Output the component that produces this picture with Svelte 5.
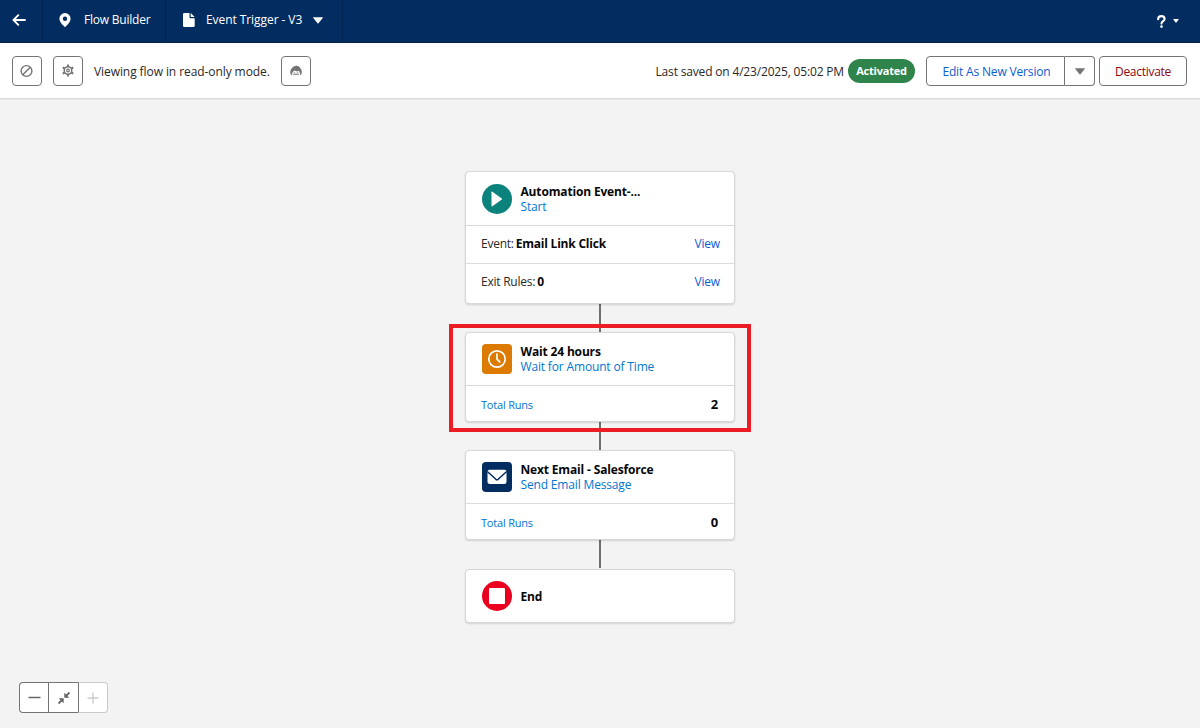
<script lang="ts">
  interface FlowRow {
    label: string;
    value: string;
    action?: string;
  }

  interface FlowNode {
    id: string;
    icon: string;
    title: string;
    type?: string;
    rows?: FlowRow[];
    runs?: number;
    highlighted?: boolean;
  }

  const nodes: FlowNode[] = [
    {
      id: 'start',
      icon: 'play',
      title: 'Automation Event-...',
      type: 'Start',
      rows: [
        { label: 'Event:', value: 'Email Link Click', action: 'View' },
        { label: 'Exit Rules:', value: '0', action: 'View' }
      ]
    },
    { id: 'wait', icon: 'clock', title: 'Wait 24 hours', type: 'Wait for Amount of Time', runs: 2, highlighted: true },
    { id: 'email', icon: 'envelope', title: 'Next Email - Salesforce', type: 'Send Email Message', runs: 0 },
    { id: 'end', icon: 'stop', title: 'End' }
  ];
</script>

<div class="builder">
  <header class="nav">
    <button class="nav-back" aria-label="Back">
      <svg width="14" height="12" viewBox="0 0 14 12"><path d="M13 6H2M6.3 1.2 1.5 6l4.8 4.8" fill="none" stroke="#fff" stroke-width="1.9" stroke-linecap="round" stroke-linejoin="round" /></svg>
    </button>
    <div class="nav-app">
      <svg width="12" height="14" viewBox="0 0 12 14"><path fill="#fff" fill-rule="evenodd" d="M6 0a5.6 5.6 0 0 0-5.6 5.6C.4 9.300 4 12.300 5.500 13.700q.5.400 1 0C8 12.300 11.600 9.300 11.600 5.600A5.600 5.600 0 0 0 6 0Zm0 3.500a2.200 2.200 0 1 1 0 4.400 2.200 2.200 0 0 1 0-4.400Z" /></svg>
      <span>Flow Builder</span>
    </div>
    <div class="nav-flow">
      <svg width="12" height="14" viewBox="0 0 12 14"><path fill="#fff" d="M1.300 0h5.200v4.200q0 1.100 1.100 1.100h4.100v7.400q0 1.300-1.300 1.300H1.300Q0 14 0 12.700V1.300Q0 0 1.300 0Zm6.400 0 4 4.100h-3.400q-.6 0-.6-.6Z" /></svg>
      <span>Event Trigger - V3</span>
      <svg class="caret" width="10" height="7" viewBox="0 0 10 7"><path fill="#fff" d="M.6.300h8.800q.8 0 .3.600L5.500 6.300q-.5.600-1 0L.300.900Q-.2.300.6.300Z" /></svg>
    </div>
    <button class="nav-help" aria-label="Help">
      <svg width="9" height="13" viewBox="0 0 9 13"><path d="M1.100 4.300C1.100 2.200 2.400 1.100 4.400 1.100s3.200 1.100 3.200 2.800c0 2.200-3.100 2.300-3.100 4.700" fill="none" stroke="#fff" stroke-width="2.100" stroke-linecap="round" /><circle cx="4.500" cy="11.600" r="1.300" fill="#fff" /></svg>
      <svg width="6" height="4" viewBox="0 0 6 4"><path d="M0 0h6L3 4Z" fill="#fff" /></svg>
    </button>
  </header>

  <div class="toolbar">
    <button class="btn btn-icon" aria-label="Toggle toolbox">
      <svg width="14" height="14" viewBox="0 0 14 14" fill="none" stroke="#747474" stroke-width="1.400"><circle cx="6.500" cy="7" r="5.400" /><path d="m2.800 10.700 7.400-7.400" /></svg>
    </button>
    <button class="btn btn-icon btn-settings" aria-label="Settings">
      <svg width="12" height="13" viewBox="0 0 12 13" fill="none" stroke="#747474"><circle cx="6" cy="6.500" r="3.800" stroke-width="1.500" /><path stroke-width="1.900" d="M6 .4v2.400M6 10.200v2.400M.7 3.400l2.100 1.200M9.200 8.400l2.100 1.200M.7 9.600l2.100-1.200M9.200 4.600l2.100-1.200" /><circle cx="6" cy="6.500" r="1.300" stroke-width="1.200" /></svg>
    </button>
    <span class="mode">Viewing flow in read-only mode.</span>
    <button class="btn btn-icon" aria-label="Einstein">
      <svg width="12" height="11" viewBox="0 0 12 11"><path fill="#747474" d="M1.800 10Q.1 9.500.6 8 -.3 6.800.7 5.800.3 4.200 1.700 3.700 1.600 2.200 3.200 2.200 3.800.6 5.300 1.200 6.200-.1 7.100 1q1.700-.5 1.900 1.100 1.600.1 1.500 1.700 1.400.6.900 2 1 1.100.1 2.200.4 1.600-1.300 2-.5-1.100-.5-3L8.500 5.800 7 6.500 4.700 5.500 2.500 7q.1 1.900-.7 3Z" /><path d="M3.700 7.900h1.500M6.800 7.900h1.500" fill="none" stroke="#747474" stroke-width=".9" /><path d="M3.200 10q1.400-1.100 2.800-.6 1.400-.5 2.800.6" fill="none" stroke="#747474" stroke-width="1" /></svg>
    </button>
    <span class="saved">Last saved on 4/23/2025, 05:02 PM</span>
    <span class="badge">Activated</span>
    <div class="btn-group">
      <button class="btn btn-edit">Edit As New Version</button>
      <button class="btn btn-more" aria-label="More actions">
        <svg width="10" height="7" viewBox="0 0 10 7"><path fill="#747474" d="M.6.300h8.800q.8 0 .3.600L5.500 6.300q-.5.600-1 0L.300.900Q-.2.300.6.300Z" /></svg>
      </button>
    </div>
    <button class="btn btn-deactivate">Deactivate</button>
  </div>

  <main class="canvas">
    <div class="flow">
      {#each nodes as node, i (node.id)}
        {#if i > 0}
          <div class="connector"></div>
        {/if}
        <section class="card {node.id}" class:highlighted={node.highlighted}>
          <div class="card-head">
            <span class="node-icon {node.icon}">
              {#if node.icon === 'play'}
                <svg width="30" height="30" viewBox="0 0 30 30"><path fill="#fff" d="M9.500 8.200q0-1 .9-.5l9.400 6.700q.8.600 0 1.200l-9.400 6.700q-.9.500-.9-.5Z" /></svg>
              {:else if node.icon === 'clock'}
                <svg width="30" height="30" viewBox="0 0 30 30" fill="none" stroke="#fff" stroke-width="1.700" stroke-linecap="round"><circle cx="15" cy="15" r="8.200" /><path d="M15 10v5.200l2.700 2.700" /></svg>
              {:else if node.icon === 'envelope'}
                <svg width="30" height="30" viewBox="0 0 30 30"><rect x="5.500" y="7.700" width="19" height="14.200" rx="1.800" fill="#fff" /><path d="m5.300 9.500 8.600 7.800q1.100.9 2.200 0l8.600-7.800" fill="none" stroke="#032d60" stroke-width="1.500" /></svg>
              {:else}
                <svg width="30" height="30" viewBox="0 0 30 30"><rect x="7" y="7" width="16" height="16" rx=".8" fill="#fff" /></svg>
              {/if}
            </span>
            <div class="node-text">
              <strong>{node.title}</strong>
              {#if node.type}
                <span>{node.type}</span>
              {/if}
            </div>
          </div>
          {#each node.rows ?? [] as row}
            <div class="card-row">
              <span class="row-label">{row.label}</span>
              <b>{row.value}</b>
              <a href="#view">{row.action}</a>
            </div>
          {/each}
          {#if node.runs !== undefined}
            <div class="card-runs">
              <span>Total Runs</span>
              <b>{node.runs}</b>
            </div>
          {/if}
        </section>
      {/each}
    </div>

    <div class="zoom">
      <button aria-label="Zoom out"><svg width="13" height="13" viewBox="0 0 13 13"><path d="M.5 6.500h12" stroke="#666" stroke-width="1.500" /></svg></button>
      <button aria-label="Fit to view"><svg width="12" height="12" viewBox="0 0 12 12" fill="#666" stroke="#666"><path stroke="none" d="M6.300.700v5h5Z M5.700 11.300v-5h-5Z" /><path stroke-width="1.900" d="M7.500 4.500 11.500.5M4.500 7.500.5 11.500" /></svg></button>
      <button class="disabled" aria-label="Zoom in" disabled><svg width="12" height="12" viewBox="0 0 12 12"><path d="M.5 6h11M6 .5v11" stroke="#c9c9c9" stroke-width="1.300" /></svg></button>
    </div>
  </main>
</div>

<style>
  :global(body) {
    margin: 0;
    overflow: hidden;
  }

  .builder {
    height: 728px;
    display: flex;
    flex-direction: column;
    font-family: 'Open Sans', 'Noto Sans', sans-serif;
    font-size: 12px;
    letter-spacing: -0.16px;
    color: #2b2826;
    background: #f3f3f3;
  }

  .builder * {
    box-sizing: border-box;
  }

  button {
    font: inherit;
    letter-spacing: inherit;
    padding: 0;
    cursor: pointer;
  }

  svg {
    display: block;
    flex: none;
  }

  .nav {
    display: flex;
    flex: none;
    height: 43px;
    background: #032d60;
    border-bottom: 1px solid #02244d;
    color: #fff;
  }

  .nav-back {
    width: 43px;
    padding-left: 12px;
    padding-bottom: 3px;
    border: none;
    border-right: 1px solid #02234b;
    background: none;
  }

  .nav-app,
  .nav-flow {
    display: flex;
    align-items: center;
    padding-bottom: 3px;
    border-right: 1px solid #02234b;
  }

  .nav-app {
    width: 123px;
    padding-left: 16px;
    gap: 13px;
    letter-spacing: -0.22px;
  }

  .nav-flow {
    width: 177px;
    padding-left: 17px;
    gap: 11px;
    letter-spacing: -0.07px;
  }

  .nav-flow .caret {
    margin-top: 2px;
  }

  .nav-help {
    display: flex;
    align-items: center;
    gap: 7px;
    margin-left: auto;
    padding-right: 21px;
    border: none;
    background: none;
  }

  .toolbar {
    display: flex;
    align-items: center;
    flex: none;
    height: 56px;
    padding: 0 13px 0 12px;
    background: #fff;
    border-bottom: 1px solid #dddbda;
    box-shadow: 0 1px 0 #e6e6e6;
  }

  .btn {
    display: flex;
    align-items: center;
    justify-content: center;
    height: 30px;
    background: #fff;
    border: 1px solid #747474;
    border-radius: 4px;
  }

  .btn-icon {
    width: 30px;
  }

  .btn-settings {
    margin-left: 11px;
  }

  .mode {
    width: 176px;
    margin: 0 11px;
    padding-top: 1px;
    letter-spacing: -0.08px;
    white-space: nowrap;
  }

  .saved {
    margin-left: auto;
    margin-right: 4px;
    padding-top: 1px;
    letter-spacing: -0.17px;
    white-space: nowrap;
  }

  .badge {
    width: 67px;
    height: 24px;
    margin-right: 11px;
    border-radius: 12px;
    background: #2e844a;
    color: #fff;
    font-size: 11px;
    font-weight: 700;
    letter-spacing: -0.2px;
    line-height: 24px;
    text-align: center;
  }

  .btn-group {
    display: flex;
    margin-right: 4px;
  }

  .btn-edit {
    width: 139px;
    padding: 1px 0 0 2px;
    border-radius: 4px 0 0 4px;
    color: #0b5cd3;
  }

  .btn-more {
    width: 30px;
    border-left: none;
    border-radius: 0 4px 4px 0;
  }

  .btn-more svg {
    margin-top: 2px;
  }

  .btn-deactivate {
    width: 88px;
    padding-top: 1px;
    letter-spacing: -0.28px;
    color: #8e030f;
  }

  .canvas {
    position: relative;
    flex: 1;
    padding-top: 72px;
  }

  .flow {
    display: flex;
    flex-direction: column;
    align-items: center;
  }

  .connector {
    width: 2px;
    height: 28px;
    background: #706e6b;
  }

  .card {
    position: relative;
    width: 270px;
    background: #fff;
    border: 1px solid #d8d7d6;
    border-radius: 4px;
    box-shadow: 0 1px 2px rgba(0, 0, 0, 0.14);
  }

  .start {
    height: 133px;
  }

  .wait,
  .email {
    height: 90px;
  }

  .end {
    height: 54px;
    margin-top: 1px;
  }

  .highlighted::after {
    content: '';
    position: absolute;
    inset: -9px -17px -11px;
    border: 4px solid #eb1c24;
  }

  .card-head {
    display: flex;
    align-items: center;
    gap: 9px;
    height: 52px;
    padding-left: 15.5px;
  }

  .start .card-head {
    height: 53px;
  }

  .node-icon {
    width: 30px;
    height: 30px;
    border-radius: 4px;
  }

  .play {
    background: #0b827c;
    border-radius: 50%;
  }

  .clock {
    background: #dd7a01;
  }

  .envelope {
    background: #032d60;
  }

  .stop {
    background: #ea001e;
    border-radius: 50%;
  }

  .node-text {
    display: flex;
    flex-direction: column;
    line-height: 15px;
    white-space: nowrap;
  }

  .node-text strong {
    color: #080707;
  }

  .node-text span,
  .card-runs span {
    color: #0176d3;
  }

  .card-row {
    display: flex;
    align-items: center;
    height: 38px;
    padding: 0 14px 2px 15px;
    border-top: 1px solid #dddbda;
  }

  .row-label {
    letter-spacing: -0.24px;
  }

  .card-row b {
    margin-left: 2px;
    letter-spacing: -0.22px;
    color: #080707;
  }

  .card-row a {
    margin-left: auto;
    color: #0b5cd3;
    text-decoration: none;
  }

  .card-runs {
    display: flex;
    align-items: center;
    justify-content: space-between;
    height: 36px;
    padding: 1px 16px 0 15px;
    border-top: 1px solid #dddbda;
  }

  .card-runs span {
    font-size: 11px;
    letter-spacing: -0.2px;
  }

  .card-runs b {
    font-size: 13px;
    color: #080707;
  }

  .end .node-text {
    padding-top: 1px;
  }

  .zoom {
    position: absolute;
    left: 19px;
    bottom: 15px;
    display: flex;
  }

  .zoom button {
    display: flex;
    align-items: center;
    justify-content: center;
    width: 30px;
    height: 31px;
    background: #fff;
    border: 1px solid #747474;
    border-right: none;
  }

  .zoom button:first-child {
    width: 29px;
    border-radius: 4px 0 0 4px;
  }

  .zoom .disabled {
    border: 1px solid #c9c9c9;
    border-left-color: #747474;
    border-radius: 0 4px 4px 0;
  }
</style>
